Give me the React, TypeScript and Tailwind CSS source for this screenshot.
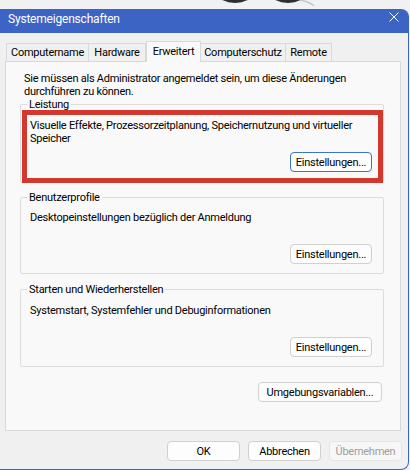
import React from "react";

const font = "font-['Roboto','Noto_Sans',sans-serif]";
const txt = "text-[11px] leading-[13px] tracking-[-0.25px]";

function Btn({ children, w, focused, disabled }: { children: React.ReactNode; w: string; focused?: boolean; disabled?: boolean }) {
  return (
    <div
      className={`${w} h-[20px] flex items-center justify-center rounded-[4px] border ${txt} ${
        disabled
          ? "border-[#e5e5e5] bg-[#f7f7f7] text-[#9d9d9d]"
          : focused
          ? "border-[#3f72c9] bg-[#fdfdfd] text-black"
          : "border-[#d0d0d0] bg-[#fdfdfd] text-black"
      }`}
    >
      {children}
    </div>
  );
}

function Group({ label, children, cls }: { label: string; children: React.ReactNode; cls: string }) {
  return (
    <fieldset className={`ml-[14px] mr-[16px] border border-[#dcdcdc] rounded-[2px] pl-[9px] pr-[11px] ${cls}`}>
      <legend className={`ml-[-3px] px-[2px] ${txt} text-black`}>{label}</legend>
      {children}
    </fieldset>
  );
}

export default function App() {
  const tabs = [
    { t: "Computername", w: "w-[83px]" },
    { t: "Hardware", w: "w-[58px]" },
    { t: "Erweitert", w: "w-[55px]", sel: true },
    { t: "Computerschutz", w: "w-[86px]" },
    { t: "Remote", w: "w-[47px]" },
  ];
  return (
    <div className={`w-[410px] h-[470px] bg-[#f1f1f1] overflow-hidden ${font} text-black`}>
      <div className="h-[9px] w-full">
        <svg width="410" height="9" viewBox="0 0 410 9">
          <ellipse cx="235" cy="-6" rx="17" ry="9" fill="#2e2e2e" />
          <ellipse cx="288" cy="-6" rx="17" ry="9" fill="#2e2e2e" />
          <path d="M300 0 Q310 2 314 6" stroke="#c8c8c8" strokeWidth="1.5" fill="none" />
        </svg>
      </div>
      <div className="w-[409px] h-[461px] flex flex-col">
        <div className="h-[24px] bg-[#3c64c4] rounded-tr-[8px] flex items-start justify-between pl-[8px] pr-[10px]">
          <span className="text-white text-[12px] leading-[16px] tracking-[-0.2px] mt-[2px]">Systemeigenschaften</span>
          <svg width="10" height="10" viewBox="0 0 10 10" className="mt-[3px]">
            <path d="M0.5 0.5 L9.5 9.5 M9.5 0.5 L0.5 9.5" stroke="#ffffff" strokeWidth="1" />
          </svg>
        </div>
        <div className="flex-1 bg-[#f0f0f0] border-r border-b border-[#3c64c4] rounded-br-[8px] flex flex-col">
          <div className="pt-[8px] pl-[6px] flex items-end h-[28px]">
            {tabs.map((t) =>
              t.sel ? (
                <div
                  key={t.t}
                  className={`${t.w} h-[21px] mb-[-1px] z-10 relative bg-[#f9f9f9] border border-b-0 border-[#d9d9d9] flex items-center justify-center ${txt} pb-[2px]`}
                >
                  {t.t}
                </div>
              ) : (
                <div
                  key={t.t}
                  className={`${t.w} h-[18px] bg-[#f0f0f0] border border-b-0 border-[#d9d9d9] flex items-center justify-center ${txt} ml-[-1px] first:ml-0`}
                >
                  {t.t}
                </div>
              )
            )}
          </div>
          <div className="relative ml-[5px] mr-[7px] h-[370px] bg-[#f9f9f9] border border-[#d9d9d9] flex flex-col">
            <div className={`pt-[10px] pl-[18px] ${txt}`}>
              <div>Sie müssen als Administrator angemeldet sein, um diese Änderungen</div>
              <div>durchführen zu können.</div>
            </div>
            <Group label="Leistung" cls="pb-[10px]">
              <div className={`mt-[8px] ${txt}`}>
                Visuelle Effekte, Prozessorzeitplanung, Speichernutzung und virtueller
                <br />
                Speicher
              </div>
              <div className="flex justify-end mt-[7px]">
                <Btn w="w-[82px]" focused>
                  Einstellungen...
                </Btn>
              </div>
            </Group>
            <Group label="Benutzerprofile" cls="mt-[8px] pb-[9px]">
              <div className={`mt-[7px] ${txt}`}>Desktopeinstellungen bezüglich der Anmeldung</div>
              <div className="flex justify-end mt-[20px]">
                <Btn w="w-[82px]">Einstellungen...</Btn>
              </div>
            </Group>
            <Group label="Starten und Wiederherstellen" cls="mt-[9px] pb-[9px]">
              <div className={`mt-[8px] ${txt}`}>Systemstart, Systemfehler und Debuginformationen</div>
              <div className="flex justify-end mt-[20px]">
                <Btn w="w-[82px]">Einstellungen...</Btn>
              </div>
            </Group>
            <div className="flex justify-end mr-[18px] mt-[15px]">
              <Btn w="w-[124px]">Umgebungsvariablen...</Btn>
            </div>
            <div className="absolute left-[16px] top-[48px] w-[361px] h-[73px] border-[5px] border-[#d2382d] pointer-events-none" />
          </div>
          <div className="flex justify-end gap-[8px] mr-[6px] mt-[10px]">
            <Btn w="w-[73px]">OK</Btn>
            <Btn w="w-[73px]">Abbrechen</Btn>
            <Btn w="w-[73px]" disabled>
              Übernehmen
            </Btn>
          </div>
        </div>
      </div>
    </div>
  );
}
